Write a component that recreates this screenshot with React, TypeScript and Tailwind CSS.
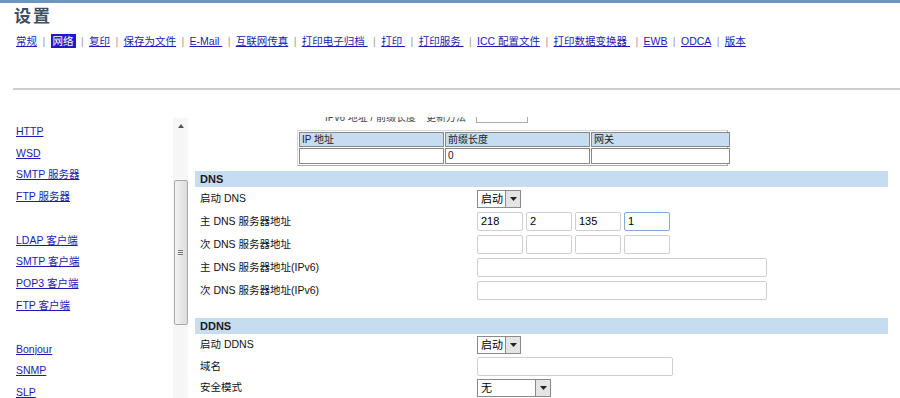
import React from 'react';

const FONT = "font-['Liberation_Sans','Noto_Sans_CJK_SC',sans-serif]";

const NAV = [
  { label: '常规' },
  { label: '网络', active: true },
  { label: '复印' },
  { label: '保存为文件' },
  { label: 'E-Mail\u00a0' },
  { label: '互联网传真' },
  { label: '打印电子归档\u00a0' },
  { label: '打印\u00a0' },
  { label: '打印服务\u00a0' },
  { label: 'ICC 配置文件' },
  { label: '打印数据变换器\u00a0' },
  { label: 'EWB' },
  { label: 'ODCA' },
  { label: '版本' },
];

const SIDE_GROUPS = [
  ['HTTP', 'WSD', 'SMTP 服务器', 'FTP 服务器'],
  ['LDAP 客户端', 'SMTP 客户端', 'POP3 客户端', 'FTP 客户端'],
  ['Bonjour', 'SNMP', 'SLP'],
];

function Select({ value, width }: { value: string; width: string }) {
  return (
    <div className={`flex h-[18px] items-stretch border border-[#8a8a8a] bg-white ${width}`}>
      <span className="flex-1 pl-[3px] text-[11px] leading-[16px] text-black">{value}</span>
      <span className="flex w-[15px] items-center justify-center border-l border-[#8a8a8a] bg-[#e4e4e4]">
        <svg width="7" height="4" viewBox="0 0 7 4">
          <path d="M0 0h7L3.5 4z" fill="#222" />
        </svg>
      </span>
    </div>
  );
}

function Box({ value = '', width, focus }: { value?: string; width: string; focus?: boolean }) {
  return (
    <div
      className={`h-[19px] rounded-[2px] border bg-white pl-[3px] text-[11px] leading-[17px] text-black ${width} ${
        focus ? 'border-[#86a9d4]' : 'border-[#cfcfcf]'
      }`}
    >
      {value}
    </div>
  );
}

function Row({ label, children, h = 'h-[23px]' }: { label: string; children?: React.ReactNode; h?: string }) {
  return (
    <div className={`flex items-center ${h}`}>
      <span className="w-[282px] pl-[5px] text-[10.5px] text-[#111]">{label}</span>
      {children}
    </div>
  );
}

function Bar({ title }: { title: string }) {
  return (
    <div className="flex h-[16px] items-center bg-[#c6dcf0] pl-[5px] text-[11px] font-bold text-[#1a1a1a]">
      {title}
    </div>
  );
}

export default function App() {
  return (
    <div className={`h-[398px] w-[900px] overflow-hidden bg-white ${FONT}`}>
      <div className="h-[3px] bg-[#6d94c2]" />

      {/* header */}
      <div className="pl-[14px]">
        <h1 className="mt-[3px] text-[17px] font-bold leading-[22px] tracking-[2px] text-[#3e4f64]">设置</h1>
        <nav className="mt-[6px] flex items-center pl-[2px] text-[10.5px] leading-[14px]">
          {NAV.map((n, i) => (
            <React.Fragment key={n.label}>
              {n.active ? (
                <span className="bg-[#1c1cc8] px-[2px] text-white">{n.label}</span>
              ) : (
                <a className="text-[#1b1bb0] underline">{n.label}</a>
              )}
              {i < NAV.length - 1 && <span className="mx-[5.4px] text-[#9a9a9a]">|</span>}
            </React.Fragment>
          ))}
        </nav>
      </div>
      <div className="ml-[13px] mt-[40px] h-[2px] w-[887px] bg-[#cfcfcf]" />

      <div className="flex">
        {/* sidebar */}
        <aside className="w-[173px] pl-[16px] pt-[34px]">
          {SIDE_GROUPS.map((g, gi) => (
            <div key={gi} className={gi > 0 ? 'mt-[22px]' : ''}>
              {g.map((s) => (
                <div key={s} className="h-[21.7px] text-[10.5px] leading-[14px]">
                  <a className="text-[#1b1bb0] underline">{s}</a>
                </div>
              ))}
            </div>
          ))}
        </aside>

        {/* scrollbar */}
        <div className="mt-[28px] flex w-[15px] flex-col items-center bg-[#f6f6f6]">
          <div className="flex h-[16px] items-center justify-center">
            <svg width="6" height="4" viewBox="0 0 6 4">
              <path d="M0 4L3 0l3 4z" fill="#555" />
            </svg>
          </div>
          <div className="mt-[46px] flex h-[145px] w-[14px] items-center justify-center rounded-[2px] border border-[#a9a9a9] bg-gradient-to-r from-[#f3f3f3] to-[#dcdcdc]">
            <div className="flex flex-col gap-[1px]">
              <span className="h-px w-[5px] bg-[#777]" />
              <span className="h-px w-[5px] bg-[#777]" />
              <span className="h-px w-[5px] bg-[#777]" />
            </div>
          </div>
        </div>

        {/* content */}
        <main className="ml-[7px] mt-[27px] h-[281px] w-[693px] overflow-hidden">
          <div className="-mt-[6px] flex h-[12px] items-center gap-[10px] pl-[130px] text-[10px] text-[#444]">
            <span>IPv6 地址 / 前缀长度</span>
            <span>更新方法</span>
            <span className="h-[11px] w-[52px] border border-[#aaa]" />
          </div>

          <div className="ml-[102px] mt-[7px] w-[431px] border border-[#d8d8d8] border-r-[#aaa] border-b-[#aaa] p-px">
            <div className="grid grid-cols-[145px_145px_139px] gap-px text-[10px] text-[#222]">
              <div className="h-[15px] border border-[#888] bg-[#c6dcf0] pl-[2px] leading-[13px]">IP 地址</div>
              <div className="h-[15px] border border-[#888] bg-[#c6dcf0] pl-[2px] leading-[13px]">前缀长度</div>
              <div className="h-[15px] border border-[#888] bg-[#c6dcf0] pl-[2px] leading-[13px]">网关</div>
              <div className="h-[16px] border border-[#888] bg-white" />
              <div className="h-[16px] border border-[#888] bg-white pl-[2px] leading-[14px]">0</div>
              <div className="h-[16px] border border-[#888] bg-white" />
            </div>
          </div>

          <div className="mt-[5px]">
            <Bar title="DNS" />
            <Row label="启动 DNS">
              <Select value="启动" width="w-[44px]" />
            </Row>
            <Row label="主 DNS 服务器地址">
              <div className="flex gap-[3px]">
                <Box value="218" width="w-[46px]" />
                <Box value="2" width="w-[46px]" />
                <Box value="135" width="w-[46px]" />
                <Box value="1" width="w-[46px]" focus />
              </div>
            </Row>
            <Row label="次 DNS 服务器地址">
              <div className="flex gap-[3px]">
                <Box width="w-[46px]" />
                <Box width="w-[46px]" />
                <Box width="w-[46px]" />
                <Box width="w-[46px]" />
              </div>
            </Row>
            <Row label="主 DNS 服务器地址(IPv6)">
              <Box width="w-[290px]" />
            </Row>
            <Row label="次 DNS 服务器地址(IPv6)">
              <Box width="w-[290px]" />
            </Row>
          </div>

          <div className="mt-[16px]">
            <Bar title="DDNS" />
            <Row label="启动 DDNS" h="h-[22px]">
              <Select value="启动" width="w-[44px]" />
            </Row>
            <Row label="域名" h="h-[21px]">
              <Box width="w-[196px]" />
            </Row>
            <Row label="安全模式" h="h-[21px]">
              <Select value="无" width="w-[74px]" />
            </Row>
          </div>
        </main>
      </div>
    </div>
  );
}
